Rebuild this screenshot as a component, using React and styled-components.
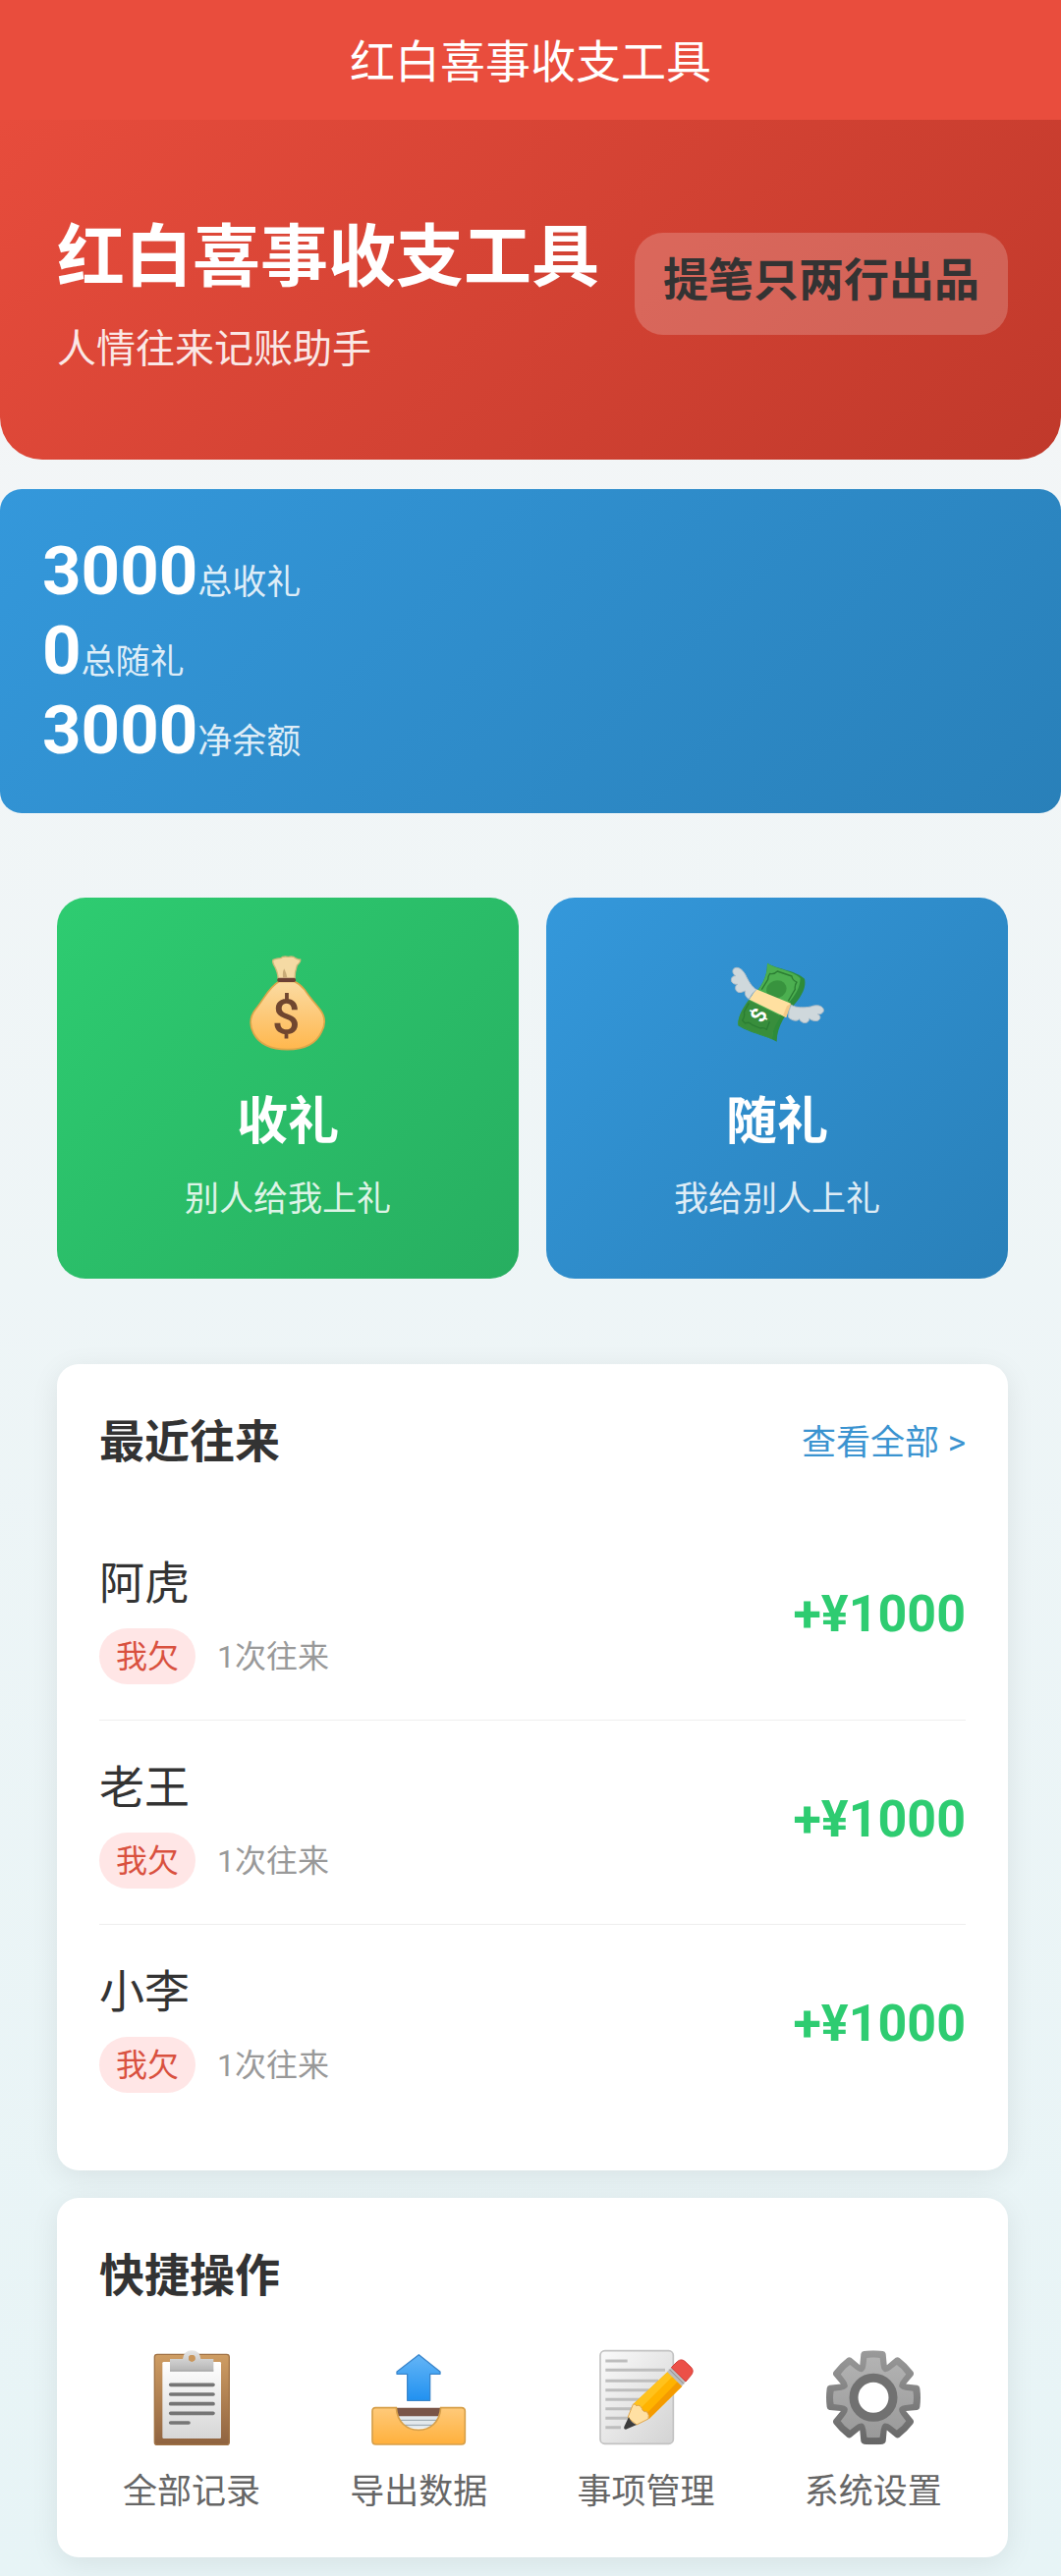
import React from "react";
import styled, { createGlobalStyle } from "styled-components";

const GlobalStyle = createGlobalStyle`
  *, *::before, *::after { box-sizing: border-box; }
  body {
    margin: 0;
    font-family: Roboto, "Noto Sans CJK SC", sans-serif;
    color: #333;
  }
  button { font: inherit; border: 0; cursor: pointer; }
  h1, h2, p, ul, dl, dd { margin: 0; padding: 0; font-weight: inherit; }
`;

const Page = styled.main`
  min-height: 100vh;
  padding-bottom: 18px;
  background: linear-gradient(180deg, #f5f6f7 0%, #e7f4f6 100%);
`;

const NavBar = styled.header`
  height: 122px;
  display: flex;
  align-items: center;
  justify-content: center;
  padding-top: 4px;
  background: #e94d3d;
  color: #fff;
  font-size: 46px;
  line-height: 64px;
`;

const Hero = styled.section`
  display: flex;
  align-items: center;
  justify-content: space-between;
  padding: 81px 54px 93px 58px;
  border-radius: 0 0 43px 43px;
  background: linear-gradient(135deg, #e74c3c 0%, #c0392b 100%);
`;

const HeroTitle = styled.h1`
  color: #fff;
  font-size: 69px;
  font-weight: 700;
  line-height: 120px;
`;

const HeroSubtitle = styled.p`
  && { margin-top: 14px; }
  color: rgba(255, 255, 255, 0.88);
  font-size: 40px;
  line-height: 38px;
`;

const HeroBadge = styled.span`
  padding: 17px 29px 25px;
  border-radius: 29px;
  background: rgba(255, 255, 255, 0.2);
  font-size: 46px;
  font-weight: 700;
  line-height: 62px;
  white-space: nowrap;
`;

const Stats = styled.dl`
  && { margin-top: 30px; padding: 43px 43px 44px; }
  border-radius: 22px;
  background: linear-gradient(135deg, #3498db 0%, #2980b9 100%);
  color: #fff;
`;

const Stat = styled.div`
  display: flex;
  align-items: baseline;
  flex-direction: row-reverse;
  justify-content: flex-end;
  height: 81px;
`;

const StatValue = styled.dd`
  font-size: 69px;
  font-weight: 700;
  line-height: 81px;
`;

const StatLabel = styled.dt`
  color: rgba(255, 255, 255, 0.86);
  font-size: 35px;
  line-height: 40px;
`;

const Content = styled.div`
  padding: 86px 54px 0 58px;
`;

const EntryGrid = styled.div`
  display: grid;
  grid-template-columns: 1fr 1fr;
  gap: 28px;
  margin-bottom: 87px;
`;

const EntryButton = styled.button`
  display: flex;
  flex-direction: column;
  align-items: center;
  padding: 58px 29px 56px;
  border-radius: 29px;
  background: linear-gradient(135deg, ${(p) => p.$from} 0%, ${(p) => p.$to} 100%);
  color: #fff;
`;

const EntryTitle = styled.span`
  margin-top: 35px;
  font-size: 52px;
  font-weight: 700;
  line-height: 72px;
`;

const EntryHint = styled.span`
  margin-top: 19px;
  color: rgba(255, 255, 255, 0.86);
  font-size: 35px;
  line-height: 48px;
`;

const Card = styled.section`
  padding: 43px;
  border-radius: 22px;
  background: #fff;
  box-shadow: 0 6px 29px rgba(0, 0, 0, 0.08);

  & + & { margin-top: 28px; }
`;

const CardHead = styled.div`
  display: flex;
  align-items: center;
  justify-content: space-between;
  padding-top: 2px;
  margin-bottom: 41px;
`;

const CardTitle = styled.h2`
  font-size: 46px;
  font-weight: 700;
  line-height: 68px;
`;

const MoreLink = styled.a`
  padding-top: 4px;
  color: #3a93d0;
  font-size: 35px;
  line-height: 64px;
  text-decoration: none;
`;

const RecordList = styled.ul`
  list-style: none;
`;

const Record = styled.li`
  display: flex;
  align-items: center;
  justify-content: space-between;
  height: 208px;

  & + & { border-top: 1px solid #eee; }
`;

const PersonName = styled.p`
  font-size: 46px;
  line-height: 64px;
`;

const Meta = styled.div`
  display: flex;
  align-items: center;
  gap: 22px;
  margin-top: 14px;
`;

const Tag = styled.span`
  padding: 2px 17px 0;
  border-radius: 29px;
  background: #ffe6e6;
  color: #d9513f;
  font-size: 32px;
  line-height: 55px;
`;

const Count = styled.span`
  padding-top: 2px;
  color: #999;
  font-size: 32px;
  line-height: 55px;
`;

const Amount = styled.strong`
  margin-bottom: 6px;
  color: #2ecc71;
  font-size: 52px;
  font-weight: 700;
  line-height: 60px;
`;

const ActionGrid = styled.div`
  display: grid;
  grid-template-columns: repeat(4, 1fr);
  gap: 43px;
`;

const ActionButton = styled.button`
  display: flex;
  flex-direction: column;
  align-items: center;
  padding: 0;
  background: none;
  color: #666;
  font-size: 35px;
  line-height: 46px;
  white-space: nowrap;
`;

const Icon = styled.svg`
  width: 100px;
  height: 100px;
  display: block;
  overflow: visible;
`;

const ActionLabel = styled.span`
  margin-top: 23px;
`;

function Fade({ id, from, to }) {
  return (
    <linearGradient id={id} x1="0" y1="0" x2="0" y2="1">
      <stop offset="0" stopColor={from} />
      <stop offset="1" stopColor={to} />
    </linearGradient>
  );
}

function MoneyBag() {
  return (
    <Icon viewBox="69 96 300 300" aria-hidden="true">
      <defs>
        <Fade id="bag" from="#fbdba3" to="#ffb74d" />
      </defs>
      <path d="M174 112Q185 107 197 107Q204 100 220 103Q236 100 242 107Q250 112 257 111Q259 118 247 129Q240 148 240 172H190Q188 146 176 127Q171 117 174 112Z" fill="#f5daa4" stroke="#cfb878" strokeWidth="4" />
      <path d="M204 166Q202 148 208 139Q215 154 217 166Z" fill="#c9ab78" />
      <path d="M193 178H238Q256 186 270 203C286 228 304 246 318 265C334 287 333 312 322 332C304 372 262 386 218 386C169 386 132 370 114 336C102 312 103 284 122 261C146 232 162 194 193 178Z" fill="url(#bag)" stroke="#dda64a" strokeWidth="5" />
      <rect x="187" y="167" width="56" height="13" rx="5" fill="#6d4034" />
      <text x="214" y="339" textAnchor="middle" fontFamily="Roboto, sans-serif" fontSize="150" fontWeight="500" fill="#70462f">$</text>
    </Icon>
  );
}

function FlyingMoney() {
  return (
    <Icon viewBox="123 96 300 300" aria-hidden="true">
      <path d="M243 122C268 139 330 144 357 170C363 196 347 224 327 247C301 276 273 312 272 362C245 344 190 337 154 313C153 281 176 250 197 226C223 196 244 166 243 122Z" fill="#2e8b3a" />
      <path d="M243 122C268 139 318 144 344 168C343 204 322 226 303 250C276 285 258 315 258 355C235 340 190 334 154 310C153 281 176 250 197 226C223 196 244 166 243 122Z" fill="#4caf50" />
      <path d="M186 235L285 284C268 310 258 330 258 355C235 340 190 334 154 310C154 282 170 257 186 235Z" fill="#388e3c" />
      <g fill="none" stroke="#2b7d33" strokeWidth="4" strokeLinejoin="round">
        <path d="M226 203L245 172Q246 160 251 154Q263 158 274 147L318 162Q319 174 333 180Q326 190 328 202L307 238" />
        <path d="M187 244L172 272Q176 285 167 297L176 306Q187 300 197 311L222 321Q232 318 241 325L250 301" />
      </g>
      <ellipse cx="271" cy="202" rx="31" ry="27" transform="rotate(-20 271 202)" fill="#38933e" />
      <path d="M209 202L315 245L300 288L188 233Z" fill="#ffe0a0" />
      <path d="M303 253L316 246L301 288L291 283Z" fill="#f5c987" />
      <text x="217" y="303" transform="rotate(-63 217 281)" textAnchor="middle" fontFamily="Roboto, sans-serif" fontSize="64" fontWeight="700" fill="#fff">$</text>
      <g fill="#cfd8dc" stroke="#aebcc6" strokeWidth="3" strokeLinejoin="round">
        <path d="M210 203C197 196 185 176 176 157C166 139 151 131 141 139C134 146 139 158 147 161C135 160 130 171 135 180C140 188 151 187 152 187C144 191 144 203 151 209C160 216 173 207 176 207C173 216 177 226 187 232Q195 214 210 203Z" />
        <path d="M316 250C333 259 353 259 376 255C392 248 413 251 415 265C416 275 404 280 397 278C408 283 406 294 397 298C387 301 374 295 371 291C372 301 361 308 351 303C342 299 342 293 341 293C334 301 318 298 308 288Q306 267 316 250Z" />
      </g>
    </Icon>
  );
}

function Clipboard() {
  return (
    <Icon viewBox="315 639 300 300" aria-hidden="true">
      <defs>
        <Fade id="board" from="#cf9d63" to="#8f6340" />
        <Fade id="sheet" from="#ffffff" to="#d6d6d6" />
        <Fade id="clip" from="#e6e6e6" to="#b4b4b4" />
      </defs>
      <rect x="352" y="655" width="228" height="276" rx="8" fill="url(#board)" stroke="#a17346" strokeWidth="4" />
      <rect x="376" y="678" width="179" height="234" rx="4" fill="url(#sheet)" />
      <path fillRule="evenodd" d="M399 669H438Q441 643 466 643Q490 643 493 669H532V707H399ZM466 657A10 10 0 1 0 466 677A10 10 0 1 0 466 657Z" fill="url(#clip)" />
      <circle cx="466" cy="667" r="10" fill="#c9965c" />
      <path d="M399 705H532" stroke="#a5a5a5" strokeWidth="3" />
      <path d="M401 748H531M401 777H531M401 806H531M401 835H531M401 864H456" stroke="#757575" strokeWidth="11" strokeLinecap="round" />
    </Icon>
  );
}

function Outbox() {
  return (
    <Icon viewBox="1008 639 300 300" aria-hidden="true">
      <defs>
        <Fade id="tray" from="#ffca7a" to="#ffb03c" />
        <Fade id="arrow" from="#64b5f6" to="#2191f0" />
      </defs>
      <path d="M1159 656L1224 708V715H1193V796H1124V715H1092V708Z" fill="url(#arrow)" stroke="#3a86cc" strokeWidth="4" strokeLinejoin="round" />
      <path d="M1090 818H1226V850H1090Z" fill="#795548" />
      <path d="M1092 844H1224L1205 880H1112Z" fill="#e3e9ec" />
      <path d="M1096 856H1220M1104 871H1213" stroke="#93a2aa" strokeWidth="3" />
      <path d="M1027 818H1090C1093 862 1122 886 1158 886C1194 886 1223 862 1226 818H1289Q1300 818 1300 829V919Q1300 930 1289 930H1028Q1017 930 1017 919V829Q1017 818 1027 818Z" fill="url(#tray)" stroke="#d7a04a" strokeWidth="5" />
    </Icon>
  );
}

function Memo() {
  return (
    <Icon viewBox="204 639 300 300" aria-hidden="true">
      <defs>
        <linearGradient id="paper" x1="0" y1="0" x2="1" y2="1">
          <stop offset="0" stopColor="#fafafa" />
          <stop offset="1" stopColor="#d3d3d3" />
        </linearGradient>
      </defs>
      <rect x="213" y="644" width="223" height="284" rx="14" fill="url(#paper)" stroke="#c2c2c2" strokeWidth="5" />
      <path d="M229 675H296M229 703H411M229 736H390M229 764H362M229 793H334M229 821H312M229 850H300M229 878H276" stroke="#bdbdbd" strokeWidth="9" />
      <path d="M419 708L463 752L362 852L313 808Z" fill="#ffb300" />
      <path d="M419 708L434 722L330 826L313 808Z" fill="#ffc21c" />
      <path d="M449 739L463 752L362 852L350 841Z" fill="#f59b00" />
      <path d="M313 808Q320 804 323 812Q335 808 340 820Q343 832 355 830Q364 840 360 852L324 870L297 848Z" fill="#ffe0a3" stroke="#e0a64c" strokeWidth="3" />
      <path d="M300 846Q307 864 324 870L291 884Q284 884 286 876Z" fill="#3c3c3c" />
      <path d="M430 695L474 738L462 752L417 708Z" fill="#bdbdbd" />
      <path d="M424 701L468 745" stroke="#8a8a8a" strokeWidth="3" />
      <path d="M430 695L448 677Q460 667 471 676L489 693Q501 704 491 718L474 738Z" fill="#ec5048" stroke="#d43c36" strokeWidth="3" />
    </Icon>
  );
}

const TEETH = [0, 45, 90, 135, 180, 225, 270, 315];

function Gear() {
  return (
    <Icon viewBox="-150 -148 300 300" aria-hidden="true">
      <defs>
        <linearGradient id="rim" gradientUnits="userSpaceOnUse" x1="0" y1="-143" x2="0" y2="143">
          <stop offset="0" stopColor="#9a9a9a" />
          <stop offset="1" stopColor="#666666" />
        </linearGradient>
        <linearGradient id="face" gradientUnits="userSpaceOnUse" x1="0" y1="-125" x2="0" y2="125">
          <stop offset="0" stopColor="#b3b3b3" />
          <stop offset="1" stopColor="#999999" />
        </linearGradient>
        <clipPath id="rimShape">
          <circle r="104" />
          {TEETH.map((a) => (
            <path key={a} transform={`rotate(${a})`} d="M-42 -90L-38 -134Q-36 -141 -29 -142Q0 -146 29 -142Q36 -141 38 -134L42 -90Z" />
          ))}
        </clipPath>
        <clipPath id="faceShape">
          <circle r="86" />
          {TEETH.map((a) => (
            <path key={a} transform={`rotate(${a})`} d="M-34 -78Q-24 -84 -23 -98L-20 -121Q0 -125 20 -121L23 -98Q24 -84 34 -78Z" />
          ))}
        </clipPath>
      </defs>
      <rect x="-150" y="-150" width="300" height="300" fill="url(#rim)" clipPath="url(#rimShape)" />
      <rect x="-150" y="-150" width="300" height="300" fill="url(#face)" clipPath="url(#faceShape)" />
      <circle r="60" fill="#fff" stroke="#717171" strokeWidth="27" />
    </Icon>
  );
}

const stats = [
  { value: "3000", label: "总收礼" },
  { value: "0", label: "总随礼" },
  { value: "3000", label: "净余额" },
];

const records = ["阿虎", "老王", "小李"];

const actions = [
  { label: "全部记录", Art: Clipboard },
  { label: "导出数据", Art: Outbox },
  { label: "事项管理", Art: Memo },
  { label: "系统设置", Art: Gear },
];

export default function App() {
  return (
    <Page lang="zh-CN">
      <GlobalStyle />
      <NavBar>红白喜事收支工具</NavBar>
      <Hero>
        <div>
          <HeroTitle>红白喜事收支工具</HeroTitle>
          <HeroSubtitle>人情往来记账助手</HeroSubtitle>
        </div>
        <HeroBadge>提笔只两行出品</HeroBadge>
      </Hero>
      <Stats>
        {stats.map((s) => (
          <Stat key={s.label}>
            <StatLabel>{s.label}</StatLabel>
            <StatValue>{s.value}</StatValue>
          </Stat>
        ))}
      </Stats>
      <Content>
        <EntryGrid>
          <EntryButton type="button" $from="#2ecc71" $to="#27ae60">
            <MoneyBag />
            <EntryTitle>收礼</EntryTitle>
            <EntryHint>别人给我上礼</EntryHint>
          </EntryButton>
          <EntryButton type="button" $from="#3498db" $to="#2980b9">
            <FlyingMoney />
            <EntryTitle>随礼</EntryTitle>
            <EntryHint>我给别人上礼</EntryHint>
          </EntryButton>
        </EntryGrid>
        <Card>
          <CardHead>
            <CardTitle>最近往来</CardTitle>
            <MoreLink href="#records">查看全部 &gt;</MoreLink>
          </CardHead>
          <RecordList id="records">
            {records.map((name) => (
              <Record key={name}>
                <div>
                  <PersonName>{name}</PersonName>
                  <Meta>
                    <Tag>我欠</Tag>
                    <Count>1次往来</Count>
                  </Meta>
                </div>
                <Amount>+¥1000</Amount>
              </Record>
            ))}
          </RecordList>
        </Card>
        <Card>
          <CardHead>
            <CardTitle>快捷操作</CardTitle>
          </CardHead>
          <ActionGrid>
            {actions.map(({ label, Art }) => (
              <ActionButton key={label} type="button">
                <Art />
                <ActionLabel>{label}</ActionLabel>
              </ActionButton>
            ))}
          </ActionGrid>
        </Card>
      </Content>
    </Page>
  );
}
